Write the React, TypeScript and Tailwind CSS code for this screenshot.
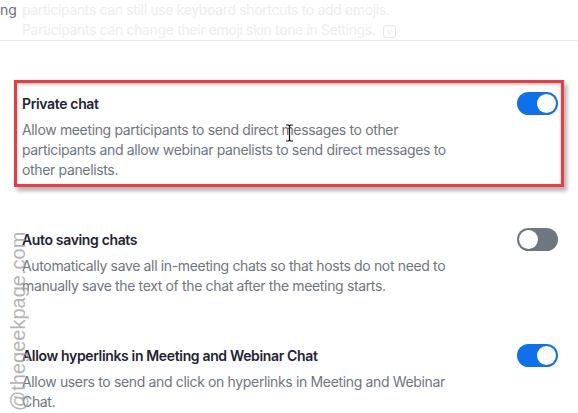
import React from "react";

type Setting = {
  title: string;
  description: string;
  enabled: boolean;
};

const settings: Setting[] = [
  {
    title: "Private chat",
    description:
      "Allow meeting participants to send direct messages to other participants and allow webinar panelists to send direct messages to other panelists.",
    enabled: true,
  },
  {
    title: "Auto saving chats",
    description:
      "Automatically save all in-meeting chats so that hosts do not need to manually save the text of the chat after the meeting starts.",
    enabled: false,
  },
  {
    title: "Allow hyperlinks in Meeting and Webinar Chat",
    description:
      "Allow users to send and click on hyperlinks in Meeting and Webinar Chat.",
    enabled: true,
  },
];

function Toggle({ on }: { on: boolean }) {
  return (
    <div
      className={
        on
          ? "mt-[-2px] flex h-[23px] w-[41px] shrink-0 items-center justify-end rounded-full bg-[#0e71eb] px-[2px]"
          : "mt-[-2px] flex h-[23px] w-[41px] shrink-0 items-center justify-start rounded-full bg-[#6e7680] px-[2px]"
      }
    >
      <div className="h-[19px] w-[19px] rounded-full bg-white" />
    </div>
  );
}

function SettingRow({ setting, highlighted }: { setting: Setting; highlighted?: boolean }) {
  return (
    <div className="relative flex items-start justify-between">
      {highlighted && (
        <div className="pointer-events-none absolute left-[-8px] right-[-6px] top-[-14px] bottom-[-7px] border-[3px] border-[#f2393f] shadow-[3px_4px_4px_rgba(0,0,0,0.3),inset_0_2px_3px_rgba(0,0,0,0.2)]" />
      )}
      <div className="w-[438px]">
        <p className="text-[14px] font-semibold leading-[20px] tracking-[-0.35px] text-[#232333]">
          {setting.title}
        </p>
        <p className="mt-[6px] text-[14px] leading-[20px] tracking-[-0.35px] text-[#6e7680]">
          {setting.description}
        </p>
      </div>
      <Toggle on={setting.enabled} />
    </div>
  );
}

export default function App() {
  return (
    <div className="relative h-[413px] w-[578px] overflow-hidden bg-white font-['Inter',sans-serif]">
      <div className="flex border-b border-[#e8e8ec]">
        <span className="w-[22px] text-[14px] leading-[20px] text-[#6c6c82]">ng</span>
        <p className="text-[14px] leading-[20px] tracking-[-0.35px] text-[#ededf0]">
          participants can still use keyboard shortcuts to add emojis.
          <br />
          Participants can change their emoji skin tone in Settings.{" "}
          <span className="ml-[4px] inline-flex h-[13px] w-[13px] items-center justify-center rounded-[3px] border border-[#e6e6ea] align-middle text-[9px] leading-none">
            v
          </span>
        </p>
      </div>

      <div className="flex flex-col gap-[50px] pl-[22px] pr-[20px] pt-[53px]">
        {settings.map((setting, index) => (
          <SettingRow key={setting.title} setting={setting} highlighted={index === 0} />
        ))}
      </div>

      {/* text cursor */}
      <svg
        className="pointer-events-none absolute left-[285px] top-[124px]"
        width="9"
        height="18"
        viewBox="0 0 9 18"
      >
        <path d="M1 1h2.5l1 1 1-1H8M4.5 2v14M1 17h2.5l1-1 1 1H8" stroke="#111" strokeWidth="1.2" fill="none" />
      </svg>

      <div className="pointer-events-none absolute left-[8px] top-[411px] origin-top-left -rotate-90 whitespace-nowrap font-['Liberation_Sans',sans-serif] text-[20px] leading-[20px] text-[#a3a3a3] opacity-80">
        @thegeekpage.com
      </div>
    </div>
  );
}
